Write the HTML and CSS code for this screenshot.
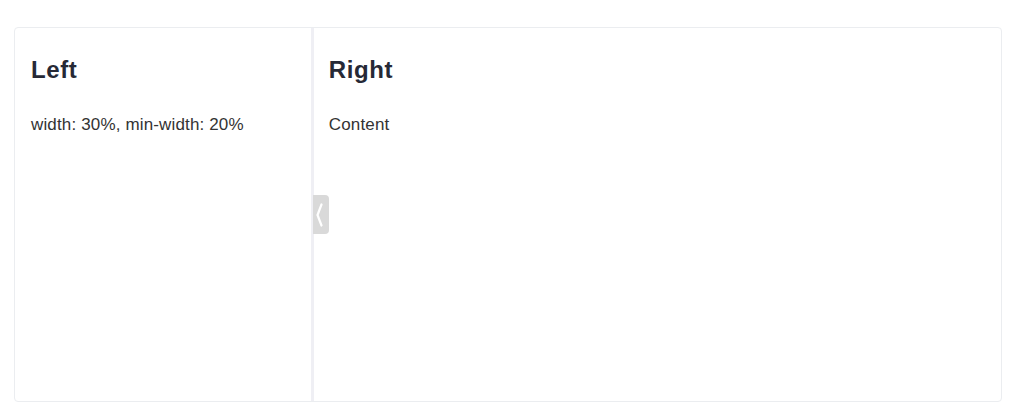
FILE: index.html
```html
<!DOCTYPE html>
<html>
<head>
<meta charset="utf-8">
<link rel="stylesheet" href="styles.css">
</head>
<body>
<div class="splitter">
  <div class="pane pane-left">
    <h2 class="title">Left</h2>
    <p class="text">width: 30%, min-width: 20%</p>
  </div>
  <div class="divider">
    <div class="handle">
      <svg width="16" height="38" viewBox="0 0 16 38"><path d="M8.5 9.5 L4.5 20 L8.5 30.5" fill="none" stroke="#fff" stroke-width="2.2" stroke-linecap="round" stroke-linejoin="round"/></svg>
    </div>
  </div>
  <div class="pane pane-right">
    <h2 class="title">Right</h2>
    <p class="text">Content</p>
  </div>
</div>
</body>
</html>
```

FILE: styles.css
```css
html, body {
  margin: 0;
  padding: 0;
  background: #fff;
}
body {
  padding: 27px 13px 6px 14px;
  font-family: "Liberation Sans", Arial, sans-serif;
}
.splitter {
  display: flex;
  height: 375px;
  box-sizing: border-box;
  border: 1px solid #ebedf0;
  border-radius: 4px;
}
.pane {
  padding: 16px;
  box-sizing: border-box;
}
.pane-left {
  width: 30%;
  min-width: 20%;
}
.pane-right {
  flex: 1;
  padding-left: 15px;
}
.divider {
  position: relative;
  width: 3px;
  background: #efeff4;
}
.handle {
  position: absolute;
  left: 2px;
  top: 167px;
  width: 16px;
  height: 39px;
  background: #d9d9d9;
  border-radius: 0 4px 4px 0;
  display: flex;
}
.title {
  margin: 12px 0 0;
  font-size: 24px;
  font-weight: 700;
  line-height: 28px;
  color: #262936;
  letter-spacing: 0.6px;
}
.text {
  margin: 30px 0 0;
  font-size: 17px;
  line-height: 22px;
  color: #333;
  letter-spacing: 0.15px;
}
```
